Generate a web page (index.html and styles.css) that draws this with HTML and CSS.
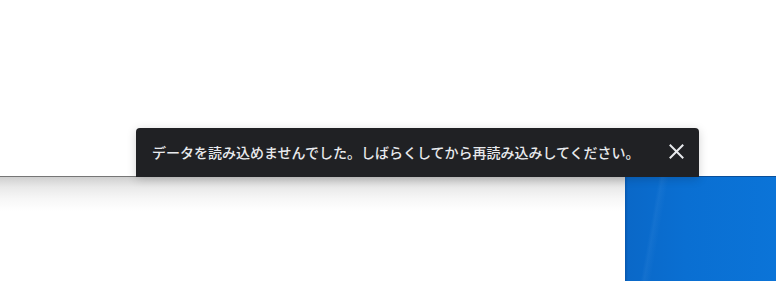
FILE: index.html
```html
<!DOCTYPE html>
<html lang="ja">
<head>
<meta charset="utf-8">
<link rel="stylesheet" href="styles.css">
</head>
<body>
<div class="page">
  <div class="top"></div>
  <div class="content">
    <div class="shade"></div>
    <div class="photo"></div>
  </div>
</div>
<div class="toast">
  <span class="msg">データを読み込めませんでした。しばらくしてから再読み込みしてください。</span>
  <button class="close" aria-label="閉じる">
    <svg width="15" height="15" viewBox="0 0 15 15"><path d="M1.5 1.5L13.5 13.5M13.5 1.5L1.5 13.5" stroke="#e8eaed" stroke-width="2" stroke-linecap="square" fill="none"/></svg>
  </button>
</div>
</body>
</html>
```

FILE: styles.css
```css
html, body {
  margin: 0;
  padding: 0;
  background: #fff;
  width: 776px;
  height: 281px;
  overflow: hidden;
}
.page {
  display: flex;
  flex-direction: column;
  height: 281px;
}
.top {
  height: 176px;
  background: #fff;
}
.content {
  flex: 1;
  display: flex;
}
.shade {
  flex: 1;
  border-top: 1px solid #767676;
  background: linear-gradient(#cfcfcf 0px, #e9e9e9 10px, #f7f7f7 22px, #fff 34px);
}
.photo {
  width: 151px;
  background:
    linear-gradient(100deg, rgba(255,255,255,0) 20%, rgba(90,160,230,0.12) 22%, rgba(255,255,255,0) 26%),
    linear-gradient(90deg, #0757ad 0px, #0a68c8 3px, #0a6fd2 40%, #0b74d8 100%);
  border-top: 1px solid #0a4f9a;
}
.toast {
  position: absolute;
  left: 136px;
  top: 128px;
  width: 563px;
  height: 49px;
  box-sizing: border-box;
  background: #202124;
  border-radius: 4px 4px 0 0;
  box-shadow: 0 2px 10px rgba(0,0,0,0.18);
  display: flex;
  align-items: center;
  padding: 0 8px 0 16px;
}
.msg {
  flex: 1;
  font-family: "Noto Sans CJK JP", "Noto Sans", sans-serif;
  font-size: 14px;
  font-weight: 500;
  color: #e8eaed;
  line-height: 20px;
  margin-top: -2px;
}
.close {
  width: 30px;
  height: 30px;
  padding: 0;
  border: 0;
  background: transparent;
  display: flex;
  align-items: center;
  justify-content: center;
  margin-top: -2px;
}
```
